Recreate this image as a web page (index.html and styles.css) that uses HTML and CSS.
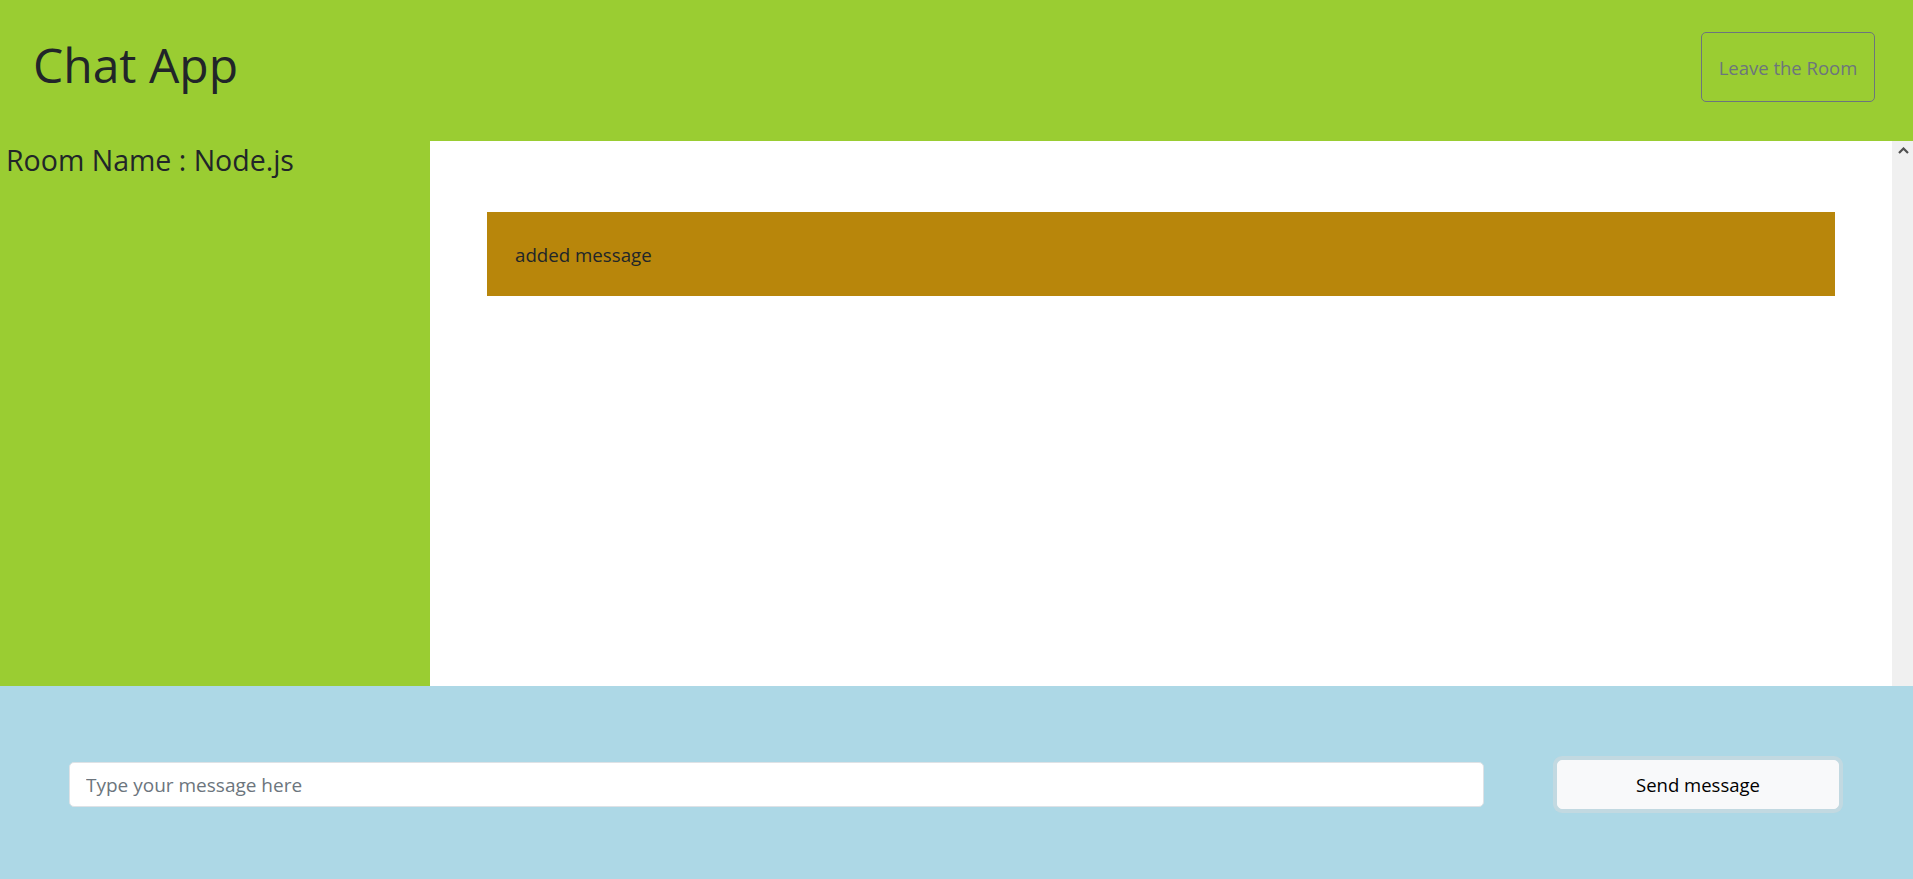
FILE: index.html
```html
<!DOCTYPE html>
<html lang="en">
<head>
<meta charset="utf-8">
<title>Chat App</title>
<link rel="stylesheet" href="styles.css">
</head>
<body>
<div class="app">
  <header class="topbar">
    <h1 class="title">Chat App</h1>
    <button class="leave-btn" type="button">Leave the Room</button>
  </header>
  <main class="content">
    <aside class="sidebar">
      <h4 class="room-name">Room Name : Node.js</h4>
    </aside>
    <section class="chat">
      <div class="messages">
        <div class="message">added message</div>
      </div>
      <div class="scrollbar">
        <svg class="scroll-up" width="11" height="7" viewBox="0 0 11 7"><path d="M1 6 L5.5 1.5 L10 6" fill="none" stroke="#505050" stroke-width="2.2"/></svg>
      </div>
    </section>
  </main>
  <footer class="composer">
    <input class="msg-input" type="text" placeholder="Type your message here">
    <button class="send-btn" type="button">Send message</button>
  </footer>
</div>
</body>
</html>
```
FILE: styles.css
```css
* { box-sizing: border-box; }
html, body { margin: 0; padding: 0; }
body {
  font-family: "Open Sans", "Noto Sans", "Liberation Sans", sans-serif;
  color: #212529;
  background: #fff;
}
.app {
  display: flex;
  flex-direction: column;
  height: 879px;
}
.topbar {
  height: 141px;
  background: #9acd32;
  display: flex;
  align-items: flex-start;
  justify-content: space-between;
  padding: 32px 38px 0 33px;
  flex: none;
}
.title {
  margin: 4px 0 0 0;
  font-size: 48px;
  font-weight: 400;
  line-height: 1.2;
}
.leave-btn {
  width: 174px;
  height: 70px;
  background: transparent;
  border: 1px solid #6c757d;
  border-radius: 5px;
  color: #6c757d;
  font-family: inherit;
  font-size: 18.5px;
  padding: 0;
}
.content {
  display: flex;
  height: 545px;
  flex: none;
}
.sidebar {
  width: 430px;
  flex: none;
  background: #9acd32;
}
.room-name {
  margin: 0;
  padding: 2px 0 0 6px;
  font-size: 28.5px;
  font-weight: 400;
  line-height: 1.2;
}
.chat {
  flex: 1;
  display: flex;
  background: #fff;
}
.messages {
  flex: 1;
  padding: 71px 57px 0 57px;
}
.message {
  height: 84px;
  background: #b8860b;
  display: flex;
  align-items: center;
  padding: 0 28px;
  font-size: 18.7px;
}
.scrollbar {
  width: 21px;
  flex: none;
  background: #f0f0f0;
  display: flex;
  justify-content: center;
  padding-top: 6px;
  padding-left: 1px;
}
.scroll-up { display: block; }
.composer {
  flex: 1;
  background: #add8e6;
  display: flex;
  align-items: center;
  padding: 4px 74px 0 69px;
  gap: 73px;
}
.msg-input {
  flex: 1;
  height: 45px;
  border: 1px solid #dee2e6;
  border-radius: 5px;
  background: #fff;
  padding: 0 16px;
  font-family: inherit;
  font-size: 19px;
  color: #495057;
  outline: none;
}
.msg-input::placeholder { color: #6c757d; }
.send-btn {
  width: 282px;
  height: 49px;
  flex: none;
  background: #f8f9fa;
  border: 1px solid #f8f9fa;
  border-radius: 5px;
  box-shadow: 0 0 0 4px rgba(216, 217, 219, 0.5);
  font-family: inherit;
  font-size: 18.5px;
  color: #000;
  padding: 0;
}
```
